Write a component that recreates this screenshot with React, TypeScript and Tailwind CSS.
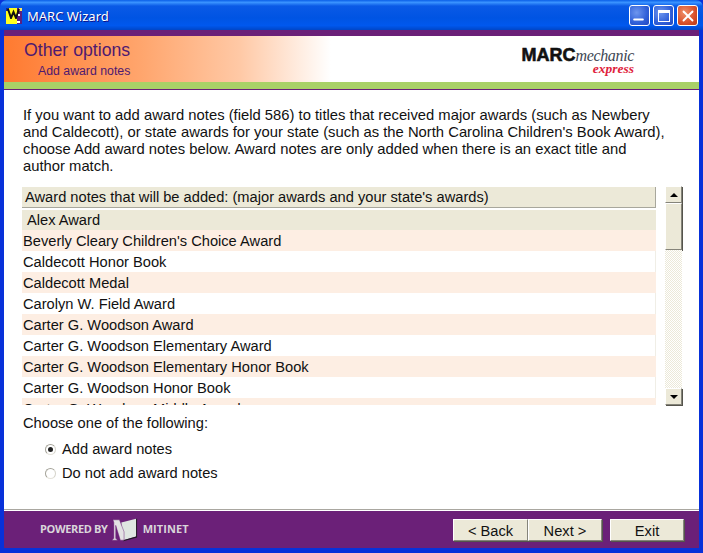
import { Minus, X } from "lucide-react";

const awards = [
  "Beverly Cleary Children's Choice Award",
  "Caldecott Honor Book",
  "Caldecott Medal",
  "Carolyn W. Field Award",
  "Carter G. Woodson Award",
  "Carter G. Woodson Elementary Award",
  "Carter G. Woodson Elementary Honor Book",
  "Carter G. Woodson Honor Book",
  "Carter G. Woodson Middle Award",
];

const raised =
  "border border-t-white border-l-white border-r-[#85847a] border-b-[#85847a] shadow-[1px_1px_0_#55544c] bg-[#ece9d8]";

const WizardIcon = () => (
  <svg width="16" height="16" viewBox="0 0 16 16" className="shrink-0">
    <rect width="16" height="16" fill="#ffff20" />
    <rect x="0" y="0" width="3" height="3" fill="#1a2a90" />
    <rect x="11" y="0" width="5" height="16" fill="#5a2080" />
    <rect x="13" y="0" width="3" height="3" fill="#ffe860" />
    <path d="M2 1 L5 10 L7.5 4 L10 10 L13 1" fill="none" stroke="#111" strokeWidth="2" />
    <path d="M0 11 H11 V13 H6 V16 H0 Z" fill="#ffff20" />
    <rect x="12" y="6" width="2" height="2" fill="#fff" />
    <rect x="11" y="13" width="3" height="2" fill="#fff" />
  </svg>
);

const BookM = () => (
  <svg width="26" height="24" viewBox="0 0 28 24" className="mx-[4px] mr-[5px]">
    <path d="M10 4 L26 0 V19 L12 23 Z" fill="#dfe6e1" />
    <path d="M26 0 H27 V20 L12 24 V23 L26 19 Z" fill="#1d1a20" />
    <path d="M1 1 H8 L13 14 V23 H9 L4 7 V21 L6 23 H0 L2 21 V4 Z" fill="#e4e2e4" stroke="#6b2078" strokeWidth="0.5" />
  </svg>
);

const Radio = ({ checked, label }: { checked?: boolean; label: string }) => (
  <label className="flex items-center h-6 pl-[23px]">
    <span className="flex items-center justify-center w-[11px] h-[11px] rounded-full border border-[#a5a399] border-b-[#e4e2da] border-r-[#d5d3ca] bg-white">
      {checked && <span className="block w-[5px] h-[5px] rounded-full bg-[#222]" />}
    </span>
    <span className="ml-[6px]">{label}</span>
  </label>
);

const WinButton = ({ children, close }: { children: React.ReactNode; close?: boolean }) => (
  <div
    className={`flex items-center justify-center w-[21px] h-[21px] rounded-[3px] border border-white ${
      close
        ? "bg-[radial-gradient(circle_at_35%_35%,#f0906a,#d8502a_60%,#b83a18)]"
        : "bg-[radial-gradient(circle_at_35%_35%,#6e96ee,#2f5fd8_60%,#2248c0)]"
    }`}
  >
    {children}
  </div>
);

export default function App() {
  return (
    <div className="w-[703px] h-[553px] flex flex-col overflow-hidden bg-[#0831d9] font-['Liberation_Sans',Arial,sans-serif] text-[14.67px] text-[#111]">
      {/* title bar */}
      <div className="h-[30px] shrink-0 flex items-center pl-[6px] pr-[5px] pt-[1px] rounded-t-[7px] bg-[linear-gradient(180deg,#0a5fe8_0%,#3a93ff_8%,#0a5ae6_20%,#0054e3_60%,#0058ee_85%,#0046c8_100%)]">
        <WizardIcon />
        <span className="ml-[5px] pt-[2px] text-white text-[13px] font-['Noto_Sans',sans-serif] [text-shadow:1px_1px_0_#0f1089]">
          MARC Wizard
        </span>
        <div className="ml-auto flex gap-[3px]">
          <WinButton>
            <Minus size={15} color="white" strokeWidth={3} className="mt-[7px] -ml-[3px]" />
          </WinButton>
          <WinButton>
            <div className="w-[12px] h-[12px] border border-white border-t-[3px]" />
          </WinButton>
          <WinButton close>
            <X size={18} color="white" strokeWidth={2.5} />
          </WinButton>
        </div>
      </div>

      {/* client area */}
      <div className="flex-1 flex flex-col mx-[4px] min-h-0 bg-white">
        <div className="h-[6px] shrink-0 bg-[#6b2078]" />
        <div className="h-[46px] shrink-0 flex items-start justify-between bg-[linear-gradient(90deg,#ff7a30_0%,#ffa66e_20%,#ffc9a6_34%,#fff_47%,#fff_100%)]">
          <div className="pl-[20px] pt-[3px] text-[#4f1a70]">
            <div className="text-[17.7px] leading-[22px]">Other options</div>
            <div className="pl-[14px] pt-[2px] text-[12.3px] leading-[16px]">Add award notes</div>
          </div>
          <div className="mr-[65px] mt-[11px] flex flex-col items-end">
            <div className="flex items-baseline leading-[16px]">
              <span className="font-['Liberation_Sans',sans-serif] font-bold text-[18px] text-[#111] [-webkit-text-stroke:0.6px_#111]">
                MARC
              </span>
              <span className="font-['Liberation_Serif',serif] italic text-[16px] text-[#3d4654] tracking-[-0.35px]">
                mechanic
              </span>
            </div>
            <span className="font-['Liberation_Serif',serif] italic font-bold text-[13.5px] leading-[10px] text-[#e0223c]">
              express
            </span>
          </div>
        </div>
        <div className="h-[7px] shrink-0 bg-[#a9d167]" />
        <div className="h-px shrink-0 bg-[#6b2078]" />

        <div className="flex-1 flex flex-col min-h-0 pl-[18px] pr-[17px]">
          <p className="pt-[17px] pl-px w-[644px] leading-[17px] text-[14.8px]">
            If you want to add award notes (field 586) to titles that received major awards (such as Newbery and
            Caldecott), or state awards for your state (such as the North Carolina Children's Book Award), choose Add
            award notes below. Award notes are only added when there is an exact title and author match.
          </p>

          <div className="mt-[11px] h-[219px] shrink-0 flex">
            <div className="w-[634px] overflow-hidden">
              <div className="h-[21px] flex items-center pl-[3px] bg-[#ece9d8] border-r border-b border-r-[#a8a79c] border-b-[#a8a79c] mt-px">
                Award notes that will be added: (major awards and your state's awards)
              </div>
              <div className="h-[20px] mt-[2px] flex items-center pl-[5px] bg-[#ece9d8]">Alex Award</div>
              {awards.map((name, i) => (
                <div
                  key={name}
                  className={`h-[21px] flex items-center pl-[1px] ${
                    i % 2 === 0 ? "bg-[#fdeee3]" : "bg-white border-r border-r-[#f0eee6]"
                  }`}
                >
                  {name}
                </div>
              ))}
            </div>
            <div className="ml-[9px] w-[17px] flex flex-col">
              <div className={`h-[17px] shrink-0 flex items-center justify-center ${raised}`}>
                <span className="w-0 h-0 border-x-[4px] border-x-transparent border-b-[4px] border-b-black" />
              </div>
              <div className={`h-[47px] shrink-0 ${raised}`} />
              <div className="flex-1 bg-[repeating-conic-gradient(#ece9d8_0_25%,#fff_0_50%)] bg-[length:2px_2px]" />
              <div className={`h-[17px] shrink-0 flex items-center justify-center ${raised}`}>
                <span className="w-0 h-0 border-x-[4px] border-x-transparent border-t-[4px] border-t-black" />
              </div>
            </div>
          </div>

          <div className="mt-[10px] pl-px leading-[17px]">Choose one of the following:</div>
          <div className="mt-[5px] flex flex-col">
            <Radio checked label="Add award notes" />
            <Radio label="Do not add award notes" />
          </div>
        </div>

        <div className="h-px shrink-0 bg-[#a9a7a0]" />
        <div className="h-px shrink-0 bg-white" />

        {/* footer */}
        <div className="h-[37px] shrink-0 flex items-center bg-[#6b2078] pl-[36px] pr-[15px]">
          <span className="font-['Open_Sans',sans-serif] font-bold text-[11px] tracking-[-0.35px] text-[#d9d5da]">
            POWERED BY
          </span>
          <BookM />
          <span className="font-['Open_Sans',sans-serif] font-bold text-[11px] tracking-[0.1px] text-[#d9d5da]">
            MITINET
          </span>
          <div className="ml-auto flex">
            <button className={`w-[75px] h-[22px] pb-[2px] ${raised}`}>&lt; Back</button>
            <button className={`w-[74px] h-[22px] pb-[2px] ${raised}`}>Next &gt;</button>
            <button className={`w-[74px] h-[22px] pb-[2px] ml-[8px] ${raised}`}>Exit</button>
          </div>
        </div>
      </div>
      <div className="h-[5px] shrink-0 bg-[#0831d9]" />
    </div>
  );
}
